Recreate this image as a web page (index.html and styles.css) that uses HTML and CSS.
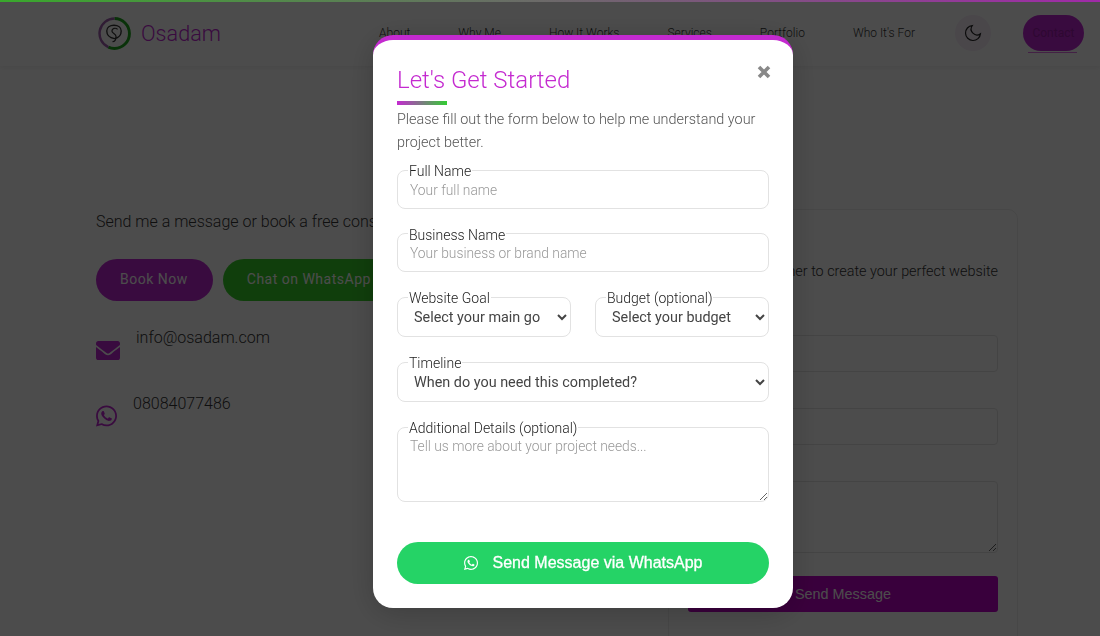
FILE: index.html
```html
<!DOCTYPE html>
<html lang="en">
<head>
    <meta charset="UTF-8">
    <meta name="viewport" content="width=device-width, initial-scale=1.0">
    <title>Osadam</title>
    <link rel="stylesheet" href="styles.css">
</head>
<body>
    <div class="top-line"></div>

    <header class="header">
        <a class="logo" href="#">
            <svg class="logo-mark" viewBox="0 0 32 32">
                <path d="M16 1.5a14.5 14.5 0 0 1 0 29c-2 0-4-.4-6-1.300" fill="none" stroke="#1fa81f" stroke-width="2.800"/>
                <path d="M10 29.200A14.500 14.500 0 0 1 16 1.500" fill="none" stroke="#a060b0" stroke-width="2.400"/>
                <path d="M16 21c-5-1-7.500-4-7.500-7.500C8.500 10 11.500 8 15.500 8s7 2 7 5.500c0 3.500-2 6.500-6.500 7.500z" fill="none" stroke="#333" stroke-width="1.300"/>
                <path d="M19 12c-2-2-5.500-1-5.500 1.500s4 2.500 4 5.500-1.500 5-3.500 5" fill="none" stroke="#333" stroke-width="1.200"/>
            </svg>
            <span>Osadam</span>
        </a>
        <nav class="nav">
            <a href="#">About</a>
            <a href="#">Why Me</a>
            <a href="#">How It Works</a>
            <a href="#">Services</a>
            <a href="#">Portfolio</a>
            <a href="#">Who It's For</a>
        </nav>
        <button class="theme-btn">
            <svg viewBox="0 0 24 24"><path d="M21 12.79A9 9 0 1 1 11.21 3 7 7 0 0 0 21 12.79z"/></svg>
        </button>
        <a class="contact-btn" href="#">Contact</a>
    </header>

    <main class="contact">
        <section class="contact-left">
            <p class="lead">Send me a message or book a free consultation today</p>
            <div class="actions">
                <a class="btn btn-purple" href="#">Book Now</a>
                <a class="btn btn-green" href="#">Chat on WhatsApp</a>
            </div>
            <div class="info info-mail">
                <svg class="info-icon" viewBox="0 64 512 384" preserveAspectRatio="none"><path d="M502.3 190.8c3.9-3.1 9.7-.2 9.7 4.7V400c0 26.5-21.5 48-48 48H48c-26.5 0-48-21.5-48-48V195.6c0-5 5.7-7.8 9.7-4.7 22.4 17.4 52.1 39.5 154.1 113.6 21.1 15.4 56.7 47.8 92.2 47.6 35.7.3 72-32.8 92.3-47.6 102-74.1 131.6-96.3 154-113.7zM256 320c23.2.4 56.6-29.2 73.4-41.4 132.7-96.3 142.8-104.7 173.4-128.7 5.8-4.5 9.2-11.5 9.2-18.9v-19c0-26.5-21.5-48-48-48H48C21.5 64 0 85.5 0 112v19c0 7.4 3.4 14.3 9.2 18.9 30.6 23.9 40.7 32.4 173.4 128.7 16.8 12.2 50.2 41.8 73.4 41.4z"/></svg>
                <span>info@osadam.com</span>
            </div>
            <div class="info info-phone">
                <svg class="info-icon" viewBox="0 0 448 512"><path d="M380.9 97.1C339 55.1 283.2 32 223.9 32c-122.4 0-222 99.6-222 222 0 39.1 10.2 77.3 29.6 111L0 480l117.7-30.9c32.4 17.7 68.9 27 106.1 27h.1c122.3 0 224.1-99.6 224.1-222 0-59.3-25.2-115-67.1-157zm-157 341.6c-33.2 0-65.7-8.9-94-25.7l-6.7-4-69.8 18.3L72 359.2l-4.4-7c-18.5-29.4-28.2-63.3-28.2-98.2 0-101.7 82.8-184.5 184.6-184.5 49.3 0 95.6 19.2 130.4 54.1 34.8 34.9 56.2 81.2 56.1 130.5 0 101.8-84.9 184.6-186.6 184.6zm101.2-138.2c-5.5-2.8-32.8-16.2-37.9-18-5.1-1.9-8.8-2.8-12.5 2.8-3.7 5.6-14.3 18-17.6 21.8-3.2 3.7-6.5 4.2-12 1.4-32.6-16.3-54-29.1-75.5-66-5.7-9.8 5.7-9.1 16.3-30.3 1.8-3.7.9-6.9-.5-9.7-1.4-2.8-12.5-30.1-17.1-41.2-4.5-10.8-9.1-9.3-12.5-9.5-3.2-.2-6.9-.2-10.6-.2-3.7 0-9.7 1.4-14.8 6.9-5.1 5.6-19.4 19-19.4 46.3 0 27.3 19.9 53.7 22.6 57.4 2.8 3.7 39.1 59.7 94.8 83.8 35.2 15.2 49 16.5 66.6 13.9 10.7-1.6 32.8-13.4 37.4-26.4 4.6-13 4.6-24.1 3.2-26.4-1.3-2.5-5-3.9-10.5-6.6z"/></svg>
                <span>08084077486</span>
            </div>
        </section>

        <section class="card">
            <p class="card-text">Work together to create your perfect website</p>
            <input class="card-input" type="text">
            <input class="card-input" type="email">
            <textarea class="card-input card-area"></textarea>
            <button class="card-send">Send Message</button>
        </section>
    </main>

    <div class="overlay">
        <div class="modal">
            <button class="close" aria-label="Close">
                <svg viewBox="0 0 14 14"><path d="M2 2l10 10M12 2L2 12"/></svg>
            </button>
            <h2 class="modal-title">Let's Get Started</h2>
            <div class="title-bar"></div>
            <p class="modal-text">Please fill out the form below to help me understand your project better.</p>

            <form class="form">
                <fieldset class="field">
                    <legend>Full Name</legend>
                    <input type="text" placeholder="Your full name">
                </fieldset>
                <fieldset class="field">
                    <legend>Business Name</legend>
                    <input type="text" placeholder="Your business or brand name">
                </fieldset>
                <div class="field-row">
                    <fieldset class="field">
                        <legend>Website Goal</legend>
                        <select><option>Select your main goal</option></select>
                    </fieldset>
                    <fieldset class="field">
                        <legend>Budget (optional)</legend>
                        <select><option>Select your budget</option></select>
                    </fieldset>
                </div>
                <fieldset class="field">
                    <legend>Timeline</legend>
                    <select><option>When do you need this completed?</option></select>
                </fieldset>
                <fieldset class="field">
                    <legend>Additional Details (optional)</legend>
                    <textarea placeholder="Tell us more about your project needs..."></textarea>
                </fieldset>
                <button class="send" type="button">
                    <svg viewBox="0 0 448 512"><path d="M380.9 97.1C339 55.1 283.2 32 223.9 32c-122.4 0-222 99.6-222 222 0 39.1 10.2 77.3 29.6 111L0 480l117.7-30.9c32.4 17.7 68.9 27 106.1 27h.1c122.3 0 224.1-99.6 224.1-222 0-59.3-25.2-115-67.1-157zm-157 341.6c-33.2 0-65.7-8.9-94-25.7l-6.7-4-69.8 18.3L72 359.2l-4.4-7c-18.5-29.4-28.2-63.3-28.2-98.2 0-101.7 82.8-184.5 184.6-184.5 49.3 0 95.6 19.2 130.4 54.1 34.8 34.9 56.2 81.2 56.1 130.5 0 101.8-84.9 184.6-186.6 184.6zm101.2-138.2c-5.5-2.8-32.8-16.2-37.9-18-5.1-1.9-8.8-2.8-12.5 2.8-3.7 5.6-14.3 18-17.6 21.8-3.2 3.7-6.5 4.2-12 1.4-32.6-16.3-54-29.1-75.5-66-5.7-9.8 5.7-9.1 16.3-30.3 1.8-3.7.9-6.9-.5-9.7-1.4-2.8-12.5-30.1-17.1-41.2-4.5-10.8-9.1-9.3-12.5-9.5-3.2-.2-6.9-.2-10.6-.2-3.7 0-9.7 1.4-14.8 6.9-5.1 5.6-19.4 19-19.4 46.3 0 27.3 19.9 53.7 22.6 57.4 2.8 3.7 39.1 59.7 94.8 83.8 35.2 15.2 49 16.5 66.6 13.9 10.7-1.6 32.8-13.4 37.4-26.4 4.6-13 4.6-24.1 3.2-26.4-1.3-2.5-5-3.9-10.5-6.6z"/></svg>
                    <span>Send Message via WhatsApp</span>
                </button>
            </form>
        </div>
    </div>
</body>
</html>
```

FILE: styles.css
```css
*{
    margin: 0;
    padding: 0;
    box-sizing: border-box;
    font-family: 'Roboto', sans-serif;
}

html, body{
    height: 100%;
    overflow: hidden;
}

body{
    background: #fff;
    color: #333;
}

a{
    text-decoration: none;
    color: inherit;
}

.top-line{
    position: fixed;
    top: 0;
    left: 0;
    width: 100%;
    height: 2px;
    z-index: 20;
    background: linear-gradient(90deg, #39a82c, #a02aa8);
}

/* header */
.header{
    display: flex;
    align-items: center;
    height: 66px;
    padding: 0 16px 0 98px;
    box-shadow: 0 1px 6px rgba(0,0,0,.08);
}

.logo{
    display: flex;
    flex: none;
    align-items: center;
    gap: 10px;
    width: 281px;
    font-size: 21.600px;
    font-weight: 300;
    color: #c026d3;
}

.logo-mark{
    width: 33px;
    height: 33px;
}

.nav{
    display: flex;
    flex: none;
    gap: 48px;
    font-size: 12px;
    font-weight: 300;
    white-space: nowrap;
}

.theme-btn{
    flex: none;
    width: 36px;
    height: 36px;
    margin-left: 40px;
    border: 0;
    border-radius: 50%;
    background: #f8edf9;
    display: flex;
    align-items: center;
    justify-content: center;
}

.theme-btn svg{
    width: 20px;
    height: 20px;
    fill: none;
    stroke: #222;
    stroke-width: 1.400;
}

.contact-btn{
    position: relative;
    flex: none;
    width: 61px;
    height: 36px;
    margin-left: 32px;
    border-radius: 18px;
    background: #c026d3;
    color: #9a1ba8;
    font-size: 12px;
    display: flex;
    align-items: center;
    justify-content: center;
}

.contact-btn::after{
    content: "";
    position: absolute;
    left: 5px;
    right: 7px;
    bottom: -2px;
    height: 1px;
    background: #e070e8;
}

/* contact section behind the popup */
.contact{
    display: flex;
    justify-content: space-between;
    padding: 143px 82px 0 96px;
}

.contact-left{
    width: 560px;
    padding-top: 3px;
}

.lead{
    font-size: 16px;
    font-weight: 300;
    line-height: 19px;
}

.actions{
    display: flex;
    gap: 10px;
    margin-top: 28px;
}

.btn{
    height: 42px;
    padding: 0 25px 2px 24px;
    border-radius: 21px;
    display: flex;
    align-items: center;
    font-size: 14px;
    letter-spacing: .5px;
    color: #fff;
}

.btn-purple{
    background: #c026d3;
}

.btn-green{
    background: #38d02a;
}

.info{
    display: flex;
    gap: 16px;
    font-size: 16px;
    font-weight: 300;
}

.info-mail{
    margin-top: 27px;
    height: 47px;
}

.info-phone{
    margin-top: 19px;
}

.info-icon{
    flex: none;
    fill: #c026d3;
}

.info-mail .info-icon{
    width: 24px;
    height: 19px;
    margin-top: 13px;
}

.info-phone .info-icon{
    width: 21px;
    height: 24px;
    margin-top: 10px;
}

.card{
    width: 350px;
    height: 500px;
    flex: none;
    border: 1px solid #eee;
    border-radius: 10px;
    padding: 53px 19px 0;
}

.card-text{
    font-size: 14.400px;
    font-weight: 300;
    text-align: right;
    line-height: 18px;
    margin-bottom: 54px;
}

.card-input{
    display: block;
    width: 100%;
    height: 37px;
    border: 1px solid #e4e4e4;
    border-radius: 4px;
    margin-bottom: 36px;
    background: #fff;
}

.card-area{
    height: 72px;
    margin-bottom: 23px;
}

.card-send{
    display: block;
    width: 100%;
    height: 36px;
    border: 0;
    border-radius: 3px;
    background: #c000c8;
    color: #fff;
    font-family: 'Liberation Sans', sans-serif;
    font-size: 14.400px;
}

/* popup */
.overlay{
    position: fixed;
    inset: 0;
    z-index: 10;
    background: rgba(0,0,0,.7);
    display: flex;
    justify-content: center;
    align-items: flex-start;
    padding: 35px 0 0 66px;
}

.modal{
    position: relative;
    flex: none;
    width: 420px;
    height: 573px;
    padding: 24px 24px 24px;
    background: #fff;
    border-top: 5px solid #c42ad0;
    border-radius: 20px;
    box-shadow: 0 5px 30px rgba(0,0,0,.2);
}

.close{
    position: absolute;
    top: 25px;
    right: 22px;
    width: 14px;
    height: 14px;
    border: 0;
    background: none;
}

.close svg{
    display: block;
    fill: none;
    stroke: #888;
    stroke-width: 3.600;
}

.modal-title{
    font-size: 24px;
    font-weight: 300;
    line-height: 32px;
    color: #c42ad0;
}

.title-bar{
    width: 50px;
    height: 4px;
    margin-top: 5px;
    background: linear-gradient(90deg, #c42ad0, #32cd32);
}

.modal-text{
    font-size: 14.400px;
    font-weight: 300;
    line-height: 23px;
    color: #555;
    margin-top: 3px;
}

.form{
    display: flex;
    flex-direction: column;
    gap: 16px;
    margin-top: 7px;
}

.field{
    border: 1px solid #e2e2e2;
    border-radius: 8px;
    min-width: 0;
    display: block;
}

.field legend{
    margin-left: 10px;
    padding: 2px 1px 0;
    font-size: 14px;
    font-weight: 300;
    line-height: 16px;
    color: #222;
}

.field-row{
    display: grid;
    grid-template-columns: 1fr 1fr;
    gap: 24px;
}

.field input,
.field select,
.field textarea{
    display: block;
    width: 100%;
    border: 0;
    outline: 0;
    background: transparent;
    color: #444;
    font-size: 13.800px;
    font-weight: 300;
}

.field input{
    height: 28.500px;
    padding: 0 12px 7px;
}

.field select{
    height: 22px;
    margin-bottom: 8px;
    padding: 0 14px 0 12px;
    font-size: 14.400px;
    font-weight: 400;
}

.field textarea{
    height: 64.500px;
    padding: 2px 12px;
}

.field input::placeholder,
.field textarea::placeholder{
    color: #999;
    opacity: 1;
}

.send{
    height: 42px;
    margin-top: 24px;
    border: 0;
    border-radius: 21px;
    background: #25d366;
    color: #fff;
    display: flex;
    align-items: center;
    justify-content: center;
    gap: 15px;
    font-size: 16px;
}

.send span{
    font-family: 'Liberation Sans', sans-serif;
    -webkit-text-stroke: .3px #fff;
}

.send svg{
    width: 14px;
    height: 16px;
    fill: #fff;
}
```
